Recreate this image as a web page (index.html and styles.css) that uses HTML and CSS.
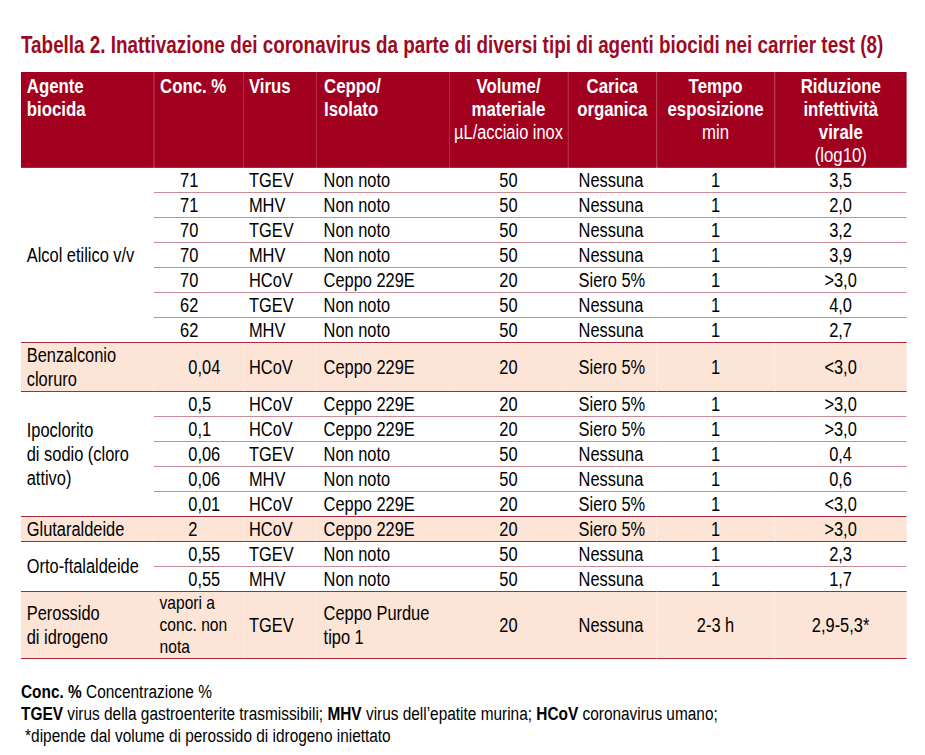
FILE: index.html
```html
<!DOCTYPE html>
<html lang="it">
<head>
<meta charset="utf-8">
<title>Tabella 2</title>
<link rel="stylesheet" href="styles.css">
</head>
<body>
<div class="page">
<h1 class="title">Tabella 2. Inattivazione dei coronavirus da parte di diversi tipi di agenti biocidi nei carrier test (8)</h1>
<table class="data">
  <colgroup>
    <col class="w-agent"><col class="w-conc"><col class="w-virus"><col class="w-ceppo">
    <col class="w-vol"><col class="w-car"><col class="w-tempo"><col class="w-rid">
  </colgroup>
  <thead>
    <tr>
      <th class="h-left">Agente<br>biocida</th>
      <th class="h-left h-conc">Conc. %</th>
      <th class="h-left h-virus">Virus</th>
      <th class="h-left h-ceppo">Ceppo/<br>Isolato</th>
      <th class="h-center">Volume/<br>materiale<br><span class="sub">µL/acciaio inox</span></th>
      <th class="h-center">Carica<br>organica</th>
      <th class="h-center">Tempo<br>esposizione<br><span class="reg">min</span></th>
      <th class="h-center">Riduzione<br>infettività<br>virale<br><span class="reg">(log10)</span></th>
    </tr>
  </thead>
  <tbody class="group">
    <tr class="r25"><td class="agent" rowspan="7">Alcol etilico v/v</td><td class="conc-a">71</td><td class="virus">TGEV</td><td class="ceppo">Non noto</td><td class="vol">50</td><td class="car">Nessuna</td><td class="tempo">1</td><td class="rid">3,5</td></tr>
    <tr class="r25 sub-row"><td class="conc-a">71</td><td class="virus">MHV</td><td class="ceppo">Non noto</td><td class="vol">50</td><td class="car">Nessuna</td><td class="tempo">1</td><td class="rid">2,0</td></tr>
    <tr class="r25 sub-row"><td class="conc-a">70</td><td class="virus">TGEV</td><td class="ceppo">Non noto</td><td class="vol">50</td><td class="car">Nessuna</td><td class="tempo">1</td><td class="rid">3,2</td></tr>
    <tr class="r25 sub-row"><td class="conc-a">70</td><td class="virus">MHV</td><td class="ceppo">Non noto</td><td class="vol">50</td><td class="car">Nessuna</td><td class="tempo">1</td><td class="rid">3,9</td></tr>
    <tr class="r25 sub-row"><td class="conc-a">70</td><td class="virus">HCoV</td><td class="ceppo">Ceppo 229E</td><td class="vol">20</td><td class="car">Siero 5%</td><td class="tempo">1</td><td class="rid">&gt;3,0</td></tr>
    <tr class="r25 sub-row"><td class="conc-a">62</td><td class="virus">TGEV</td><td class="ceppo">Non noto</td><td class="vol">50</td><td class="car">Nessuna</td><td class="tempo">1</td><td class="rid">4,0</td></tr>
    <tr class="r25 sub-row"><td class="conc-a">62</td><td class="virus">MHV</td><td class="ceppo">Non noto</td><td class="vol">50</td><td class="car">Nessuna</td><td class="tempo">1</td><td class="rid">2,7</td></tr>
  </tbody>
  <tbody class="group pink">
    <tr class="r48"><td class="agent">Benzalconio<br>cloruro</td><td class="conc-r">0,04</td><td class="virus">HCoV</td><td class="ceppo">Ceppo 229E</td><td class="vol">20</td><td class="car">Siero 5%</td><td class="tempo">1</td><td class="rid">&lt;3,0</td></tr>
  </tbody>
  <tbody class="group">
    <tr class="r25"><td class="agent" rowspan="5">Ipoclorito<br>di sodio (cloro<br>attivo)</td><td class="conc-b">0,5</td><td class="virus">HCoV</td><td class="ceppo">Ceppo 229E</td><td class="vol">20</td><td class="car">Siero 5%</td><td class="tempo">1</td><td class="rid">&gt;3,0</td></tr>
    <tr class="r25 sub-row"><td class="conc-b">0,1</td><td class="virus">HCoV</td><td class="ceppo">Ceppo 229E</td><td class="vol">20</td><td class="car">Siero 5%</td><td class="tempo">1</td><td class="rid">&gt;3,0</td></tr>
    <tr class="r25 sub-row"><td class="conc-b">0,06</td><td class="virus">TGEV</td><td class="ceppo">Non noto</td><td class="vol">50</td><td class="car">Nessuna</td><td class="tempo">1</td><td class="rid">0,4</td></tr>
    <tr class="r25 sub-row"><td class="conc-b">0,06</td><td class="virus">MHV</td><td class="ceppo">Non noto</td><td class="vol">50</td><td class="car">Nessuna</td><td class="tempo">1</td><td class="rid">0,6</td></tr>
    <tr class="r25 sub-row"><td class="conc-b">0,01</td><td class="virus">HCoV</td><td class="ceppo">Ceppo 229E</td><td class="vol">20</td><td class="car">Siero 5%</td><td class="tempo">1</td><td class="rid">&lt;3,0</td></tr>
  </tbody>
  <tbody class="group pink">
    <tr class="r25"><td class="agent">Glutaraldeide</td><td class="conc-b">2</td><td class="virus">HCoV</td><td class="ceppo">Ceppo 229E</td><td class="vol">20</td><td class="car">Siero 5%</td><td class="tempo">1</td><td class="rid">&gt;3,0</td></tr>
  </tbody>
  <tbody class="group">
    <tr class="r25"><td class="agent" rowspan="2">Orto-ftalaldeide</td><td class="conc-b">0,55</td><td class="virus">TGEV</td><td class="ceppo">Non noto</td><td class="vol">50</td><td class="car">Nessuna</td><td class="tempo">1</td><td class="rid">2,3</td></tr>
    <tr class="r25 sub-row"><td class="conc-b">0,55</td><td class="virus">MHV</td><td class="ceppo">Non noto</td><td class="vol">50</td><td class="car">Nessuna</td><td class="tempo">1</td><td class="rid">1,7</td></tr>
  </tbody>
  <tbody class="group pink last">
    <tr class="r67"><td class="agent">Perossido<br>di idrogeno</td><td class="conc-s">vapori a<br>conc. non<br>nota</td><td class="virus">TGEV</td><td class="ceppo">Ceppo Purdue<br>tipo 1</td><td class="vol">20</td><td class="car">Nessuna</td><td class="tempo">2-3 h</td><td class="rid">2,9-5,3*</td></tr>
  </tbody>
</table>
<div class="notes">
  <p><b>Conc. %</b> Concentrazione %</p>
  <p><b>TGEV</b> virus della gastroenterite trasmissibili; <b>MHV</b> virus dell’epatite murina; <b>HCoV</b> coronavirus umano;</p>
  <p class="indent">*dipende dal volume di perossido di idrogeno iniettato</p>
</div>
</div>
</body>
</html>
```
FILE: styles.css
```css
html, body {
  margin: 0;
  padding: 0;
  background: #ffffff;
  overflow: hidden;
}
body {
  font-family: "Liberation Sans", Arial, sans-serif;
  color: #000000;
}
/* Arial Narrow look: Arial metrics condensed horizontally */
.page {
  width: 1080px;
  margin: 0 -176px 0 21px;
  transform: scaleX(0.82);
  transform-origin: 0 0;
}
.title {
  margin: 33px 0 15px 0;
  font-size: 23px;
  line-height: 24px;
  font-weight: bold;
  color: #9e0a22;
  white-space: nowrap;
}
.data {
  width: 1080px;
  table-layout: fixed;
  border-collapse: collapse;
  font-size: 20px;
}
.w-agent { width: 162px; }
.w-conc { width: 109px; }
.w-virus { width: 89px; }
.w-ceppo { width: 162px; }
.w-vol { width: 145px; }
.w-car { width: 108px; }
.w-tempo { width: 144px; }
.w-rid { width: 161px; }

.data thead tr { height: 95px; }
.data th {
  background: #a1001f;
  color: #ffffff;
  font-weight: bold;
  font-size: 20.5px;
  vertical-align: top;
  padding: 2px 0 0 0;
  line-height: 23px;
  border-left: 1px solid #b33448;
  white-space: nowrap;
}
.data th:first-child { border-left: none; }
.data th.h-left { text-align: left; padding-left: 7px; }
.data th.h-ceppo { padding-left: 9px; }
.data th.h-virus { border-left: none; }
.data th.h-center { text-align: center; }
.data th .sub { font-weight: normal; font-size: 20px; }
.data th .reg { font-weight: normal; }

.data td {
  padding: 0;
  line-height: 24px;
  white-space: nowrap;
  vertical-align: middle;
}
.data tr.r25 { height: 25px; }
.data tr.r48 { height: 48px; }
.data tr.r67 { height: 67px; }
.data tbody.group { border-top: 1px solid #a8283d; }
.data tbody.last { border-bottom: 1px solid #a8283d; }
.data tr.sub-row td { border-top: 1px solid #c98b95; }
.data tbody.pink td { background: #fce4d6; }

.data td.agent { padding-left: 7px; }
.data td.conc-a { padding-left: 32px; }
.data td.conc-b { padding-left: 42px; }
.data td.conc-r { text-align: right; padding-right: 28px; }
.data td.conc-s { padding-left: 7px; font-size: 19px; line-height: 22px; }
.data td.virus { padding-left: 7px; }
.data td.ceppo { padding-left: 9px; }
.data td.vol { text-align: center; }
.data td.car { padding-left: 13px; }
.data td.tempo { text-align: center; }
.data td.rid { text-align: center; }

.notes {
  margin-top: 22px;
  font-size: 18.8px;
  line-height: 22px;
}
.notes p { margin: 0; }
.notes .indent { padding-left: 5px; }
```
